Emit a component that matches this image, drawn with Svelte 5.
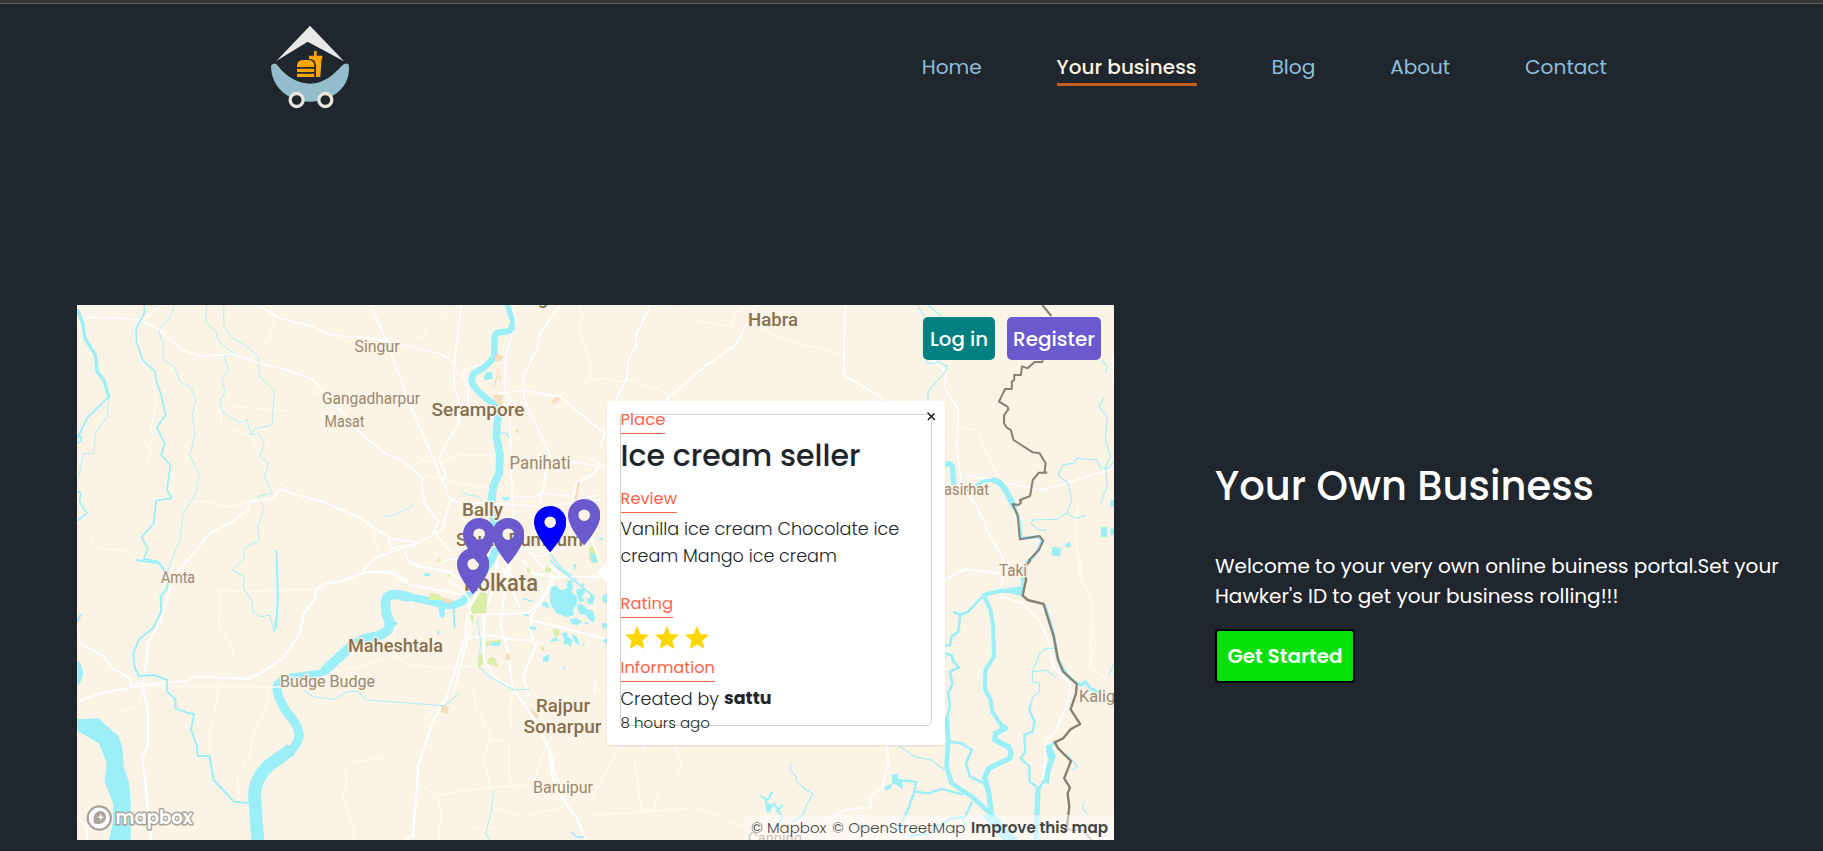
<script>
  const nav = [
    { label: 'Home', w: 60 },
    { label: 'Your business', w: 140, active: true },
    { label: 'Blog', w: 44 },
    { label: 'About', w: 60 },
    { label: 'Contact', w: 82 }
  ];

  // Map pins: tip x and top y inside the map, in pixels
  const pins = [
    { x: 401.5, y: 212.5, color: 'slateblue' },
    { x: 431, y: 212.5, color: 'slateblue' },
    { x: 396, y: 243, color: 'slateblue' },
    { x: 473, y: 200.5, color: 'blue' },
    { x: 507, y: 193.5, color: 'slateblue' }
  ];

  // Sizes a line of type so that it takes the given width
  function fit(node, width) {
    const natural = node.getBoundingClientRect().width;
    const size = parseFloat(getComputedStyle(node).fontSize);
    node.style.fontSize = (size * width) / natural + 'px';
  }
</script>

<div class="page">
  <header>
    <svg class="logo" viewBox="60 72 240 256" width="80" height="85.3">
      <path fill="#e9e9ea" d="M180 77 282 184 173 125 79 183Z" />
      <path fill="#93bdcd" d="M63 199Q64 191 71 191 78 190 84 198C110 232 145 251 181 251 220 250 246 230 277 196Q286 188 294 192 298 194 297 208C296 265 246 305 180 305 114 305 64 262 63 199Z" />
      <g fill="#ffa500">
        <path d="M141 201V195Q143 180 160 180H174Q191 180 193 195V201Z" />
        <path d="M141 206H193V216H141ZM141 221H193V231H141Z" />
        <path d="M192 153H200V167H217V176H215L211 231H198V196Q198 187 191 180L177 176V167H192Z" />
      </g>
      <g fill="#20262d" stroke="#e8e5dc" stroke-width="10">
        <circle cx="140" cy="300" r="19.5" /><circle cx="226" cy="300" r="19.5" />
      </g>
    </svg>
    <nav>
      {#each nav as item}
        <a class:active={item.active} style="width:{item.w}px"><span use:fit={item.w}>{item.label}</span></a>
      {/each}
    </nav>
  </header>

  <main>
    <section class="map">
      <svg class="tiles" viewBox="0 0 1037 535" width="1037" height="535">
        <rect width="1037" height="535" fill="#fbf3e5" />

        <g transform="translate(-7 -5) scale(.338 .33333)" fill="none" stroke-linejoin="round">
          <g stroke="#fffaf3" stroke-width="4">
            <path d="M205 160 215 190 245 240 255 310 240 390 250 415 230 435 238 460 225 495 250 515 290 540 310 580 345 605 400 604 450 620 500 617 525 605M20 665 55 700 80 745 155 750 210 790 270 820 340 830" />
            <path d="M595 15 605 70 590 120 550 150 530 180M440 340 455 325 520 322 640 333 700 300 725 278 745 276M445 345 450 375 540 410 555 460 580 515 620 545 655 575M1010 500 1040 480 1080 490 1160 465 1260 465M1045 528 1105 532 1150 550 1240 565M1010 135 1020 120 1050 105 1060 80 1100 50 1150 20" />
            <path d="M1510 15 1518 60 1505 80 1540 190 1540 240 1470 270 1430 295M885 665 905 720 920 770" />
          </g>
          <g stroke="#a9f0f2" stroke-width="2.6">
            <path d="M310 15 292 60 262 90 275 130 275 180 310 200 325 245 358 262 372 300 362 345 370 400 355 465 382 520 372 580 335 640 325 720 300 780 285 830" />
            <path d="M405 15 400 65 432 95 440 125 485 160 455 170 470 210 450 240 460 275 445 300 450 335 500 368 525 360 535 405 560 400 575 435 560 470 588 490 575 530 598 580 555 590 575 625 555 680 560 720 515 745 515 775 480 810" />
            <path d="M455 15 455 80 480 115 525 140 557 170 560 230 605 270 598 375 550 385 530 405M115 290 110 350 75 400 70 460 40 462 25 535M932 650 960 645 1018 615M1158 567 1170 583 1210 590 1225 605" />
          </g>
          <g stroke="#fff" stroke-width="5">
            <path d="M22 70 60 52 150 54 215 62 265 90 330 150 390 168 485 163 560 190 650 212 720 240 790 320 870 410 940 465 980 480 1040 530 1047 610 1090 665 1075 695 1105 730 1125 755" />
            <path d="M215 62 270 15M555 15 620 55 720 80 770 105 900 115 980 135 1095 160 1138 190" />
            <path d="M888 15 940 130 1000 300 1060 440 1125 600 1100 690 1025 730 900 775 865 815M1158 15 1140 160 1135 250 1150 300 1150 370 1090 475 1112 520 1100 545" />
            <path d="M1310 15 1320 60 1290 160 1285 270 1300 300 1305 500 1312 700 1300 830M1450 15 1390 100 1380 150 1340 230 1345 300 1420 465 1390 610M1250 180 1180 205 1160 220 1180 270 1175 330" />
            <path d="M1270 280 1350 272 1450 290 1568 390M1480 485 1568 498 1545 525 1500 545 1485 600 1568 585M1310 590 1370 590 1400 580 1485 588M1125 600 1160 608 1240 610 1320 615 1400 620 1568 600" />
            <path d="M320 815 415 700 480 665 525 630 530 605 595 597 625 567 660 582 750 605 860 655 940 710 950 745 1025 732M945 715 1025 727M990 750 1000 780 1040 800 1110 815 1165 840M805 840 880 815 960 815 1000 840" />
            <path d="M1095 785 1180 770 1260 760 1330 745 1390 770 1470 740 1500 620M1200 750 1270 800 1330 840M1340 730 1390 790 1430 830" />
          </g>
          <g stroke="#9beff8">
            <path stroke-width="10" d="M22 28 38 70 44 115 75 165 80 215 100 240 115 290" />
            <path stroke-width="6" d="M115 290 50 355 22 415" />
            <path stroke-width="5" d="M20 410H32V422L22 430M220 15V40L195 85 197 125 215 180 252 215 257 250 270 285 283 345 257 382 280 430 270 465 297 495 287 570 301 595 255 602 248 670 212 712 230 745 218 777 260 784 285 818M22 575 32 578 28 605 50 640 22 662M611 750 613 840" />
            <path stroke-width="15" d="M1294 15 1309 60 1307 84 1296 94 1262 98" />
            <path stroke-width="19" d="M1308 75Q1310 93 1292 94L1265 98 1256 110 1255 170Q1235 200 1195 220 1180 240 1200 265 1230 300 1268 317" />
            <path stroke-width="23" d="M1265 312 1266 355 1261 405 1272 465 1270 518 1252 560 1246 615 1258 680 1266 735 1245 785 1175 890Q1155 920 1110 915L1050 900 960 883" />
            <path stroke-width="29" d="M1005 892 970 884Q930 880 934 915L937 945Q953 975 940 990 920 1010 875 1015L830 1040 750 1115" />
            <path stroke-width="20" d="M845 1025 750 1118 640 1133 613 1155 615 1175" />
            <path stroke-width="27" d="M630 1142Q603 1155 619 1195L640 1235Q690 1290 674 1320 667 1350 605 1390" />
            <path stroke-width="38" d="M655 1348 590 1395Q545 1435 546 1490L556 1625" />
            <path stroke-width="4" d="M1420 760 1450 800 1500 840M1265 398 1290 400 1300 412" />
          </g>
          <path fill="#9beff8" d="M1230 218 1248 215 1252 235 1235 240 1222 237ZM1280 590 1300 592 1298 600 1280 600ZM1490 795 1498 790 1495 808 1488 808ZM1048 820H1065V828H1048Z" />
          <path fill="#f3debb" d="M1250 285 1280 285 1280 320 1265 315ZM1425 300 1440 290 1452 297 1430 314ZM1262 160 1285 172 1270 184 1255 180ZM1320 385 1331 398 1320 398ZM1503 545 1508 545 1500 600 1492 600Z" />
          <path stroke="#f3debb" stroke-width="3" d="M1255 262 1268 205 1274 245M1260 240 1272 230" />
          <path fill="#daeeaa" d="M1090 775 1102 780 1085 790ZM1538 740 1550 738 1560 785 1545 790 1535 770ZM1405 800 1425 805 1420 818 1407 815ZM1352 800 1365 812 1355 820Z" />
        </g>

        <g transform="translate(-7 255) scale(.338 .33333)" fill="none" stroke-linejoin="round">
          <g stroke="#fffaf3" stroke-width="4">
            <path d="M445 90 440 200 480 260 485 290 540 330M445 90 520 95 640 90 750 88M440 370 435 430 412 510 415 580M222 378 480 378 600 382 700 370M590 385 580 440 535 545 535 580 495 650 500 720M150 455 205 440 210 405" />
            <path d="M1110 420 1000 520 920 597 830 605 815 640 820 680 805 710 840 800 838 840M1030 673 1090 705 1250 680 1370 677 1390 600 1425 530M1085 705 1100 760 1090 840M1240 540 1300 545 1298 640 1310 675M1240 740 1340 770 1460 740M1150 840 1200 800 1260 805 1290 840M1195 385 1200 440 1245 530 1225 600 1245 680M1310 400 1300 460 1310 510" />
            <path d="M1015 140 960 200 960 290 1010 315 1120 325 1205 315M700 380 790 330 860 320 940 290 960 270" />
          </g>
          <g stroke="#fff" stroke-width="6">
            <path d="M22 425 90 400 215 376 350 362 370 350 530 356 580 330 630 295 680 220 692 160 725 115 727 90 750 72 810 62 880 35 950 40 1010 75 1100 92 1160 105" />
            <path d="M345 0 300 65 285 125 265 190 230 250 228 300 215 376 230 450 230 560 215 590 225 690 240 840M22 210 32 250 100 290 125 325 180 355 180 380 215 378M188 382Q190 365 215 370 225 390 210 403M22 770 50 805 52 840" />
            <path d="M1120 65 1150 80 1180 115 1185 160 1290 162 1360 158 1385 130 1410 95 1430 50 1568 50M1175 160 1170 230 1115 410 1075 480 1030 620 1015 830M1185 165 1183 210 1165 280 1135 400M1000 0 1030 20 1130 35M990 840 1015 825" />
            <path d="M1235 50 1225 190 1225 300 1260 355 1310 385 1350 440 1380 490 1418 570 1425 640 1440 690 1470 735 1500 775 1525 840M1395 520 1428 590 1430 630 1460 700 1470 735M1290 30 1275 200 1295 270 1310 380M1420 20 1450 40 1390 130 1365 170 1360 210 1378 260 1340 350 1358 410M1360 180 1450 200 1568 235M1180 235 1240 225 1320 240 1375 240M1265 0 1250 90 1220 180M1200 0 1230 40 1200 110 1185 140M1340 0 1370 40 1430 50M1290 0 1310 90 1330 140" />
          </g>
          <g stroke="#a9f0f2" stroke-width="3">
            <path d="M480 30 515 50 513 85 540 125 540 155 565 170 590 165 605 215 607 180M690 390 720 410 780 418 820 395 850 392 875 420 1110 437 1150 400M1205 180 1215 240 1210 320 1240 350 1315 390 1360 388M1255 690 1245 760 1230 820 1240 840" />
          </g>
          <g stroke="#9beff8" stroke-width="6">
            <path d="M612 0 615 120 609 205M195 0 265 10 292 50 288 85 268 110 270 155 245 205 205 237 187 280 192 325 205 348 250 345 287 360 288 395 312 418 312 445 345 458 367 462 358 510 375 555 378 588 413 588 425 660 485 725 535 730M22 185 32 162M1135 140 1138 205" />
            <path stroke-width="5" d="M1482 815 1500 832 1520 830M1420 0 1440 20 1490 60 1550 110M1340 115 1370 125" />
          </g>
          <g fill="#9beff8">
            <path d="M22 478 85 475 102 492 143 528 155 560 159 620 174 665 180 720V840H115L127 790 128 730 102 665 109 610 85 550 22 512ZM22 300Q40 320 38 345 35 365 22 375Z" />
            <path d="M1422 82 1440 77 1450 90 1470 85 1472 62 1485 60 1488 82 1482 95 1500 110 1500 130 1488 150 1492 165 1470 172 1440 160 1420 130ZM1395 128 1410 125 1420 145 1400 140Z" />
            <path d="M1498 88 1520 84 1524 98 1515 108 1522 122 1508 128 1500 108ZM1512 70H1522V78H1512ZM1530 112 1548 125 1545 135 1530 128ZM1498 135 1515 132 1532 150 1540 148 1555 175 1538 182 1525 165 1508 162ZM1478 178 1498 174 1515 186 1500 196 1485 192ZM1520 185 1535 188 1530 196Z" />
            <path d="M1420 240 1440 230 1445 243 1425 245ZM1455 220 1470 217 1475 232 1488 240 1480 262 1472 250 1458 256 1462 240ZM1485 222 1500 232 1510 255 1498 250 1490 242ZM1515 250 1525 255 1520 262ZM1400 290 1420 282 1415 305 1400 305ZM1360 198 1380 202 1378 210 1362 208ZM1245 247 1275 247 1272 257 1245 257ZM1458 318 1467 322 1465 330ZM1085 215 1095 213 1090 225Z" />
            <path d="M1090 142 1110 145 1108 170 1100 175 1093 165ZM955 180 970 190 955 205ZM1343 163H1357V169H1343Z" />
          </g>
          <path fill="#daeeaa" d="M1067 98 1095 105 1105 120 1060 120ZM1215 95 1235 100 1232 160 1190 162 1185 145ZM1183 165 1195 165 1190 195ZM1430 205 1450 210 1445 230 1430 225ZM1230 245 1275 240 1278 246 1245 247 1240 258 1230 260ZM1240 293 1255 292 1268 320 1232 310ZM1208 285 1220 282 1222 315 1207 322ZM1390 258 1405 265 1398 275ZM1118 42 1128 45 1122 55ZM1352 20 1365 32 1355 42ZM1405 20 1425 28 1420 38Z" />
          <path fill="#f3debb" d="M1100 437 1122 440 1115 462 1097 455ZM1103 112 1132 120 1128 130 1103 126ZM1293 275 1303 290 1300 302 1288 295ZM1365 445 1385 465 1385 480 1365 460ZM1435 58 1443 60 1438 70Z" />
        </g>

        <g transform="translate(513 -5) scale(.338 .33333)" fill="none" stroke-linejoin="round">
          <g stroke="#fffaf3" stroke-width="4">
            <path d="M220 15 300 60 420 80 430 40 460 20M490 75 560 115 750 165M0 240 35 235 80 245 140 240 155 260 200 265 235 290M1085 380 1145 390 1160 430 1210 530M1445 600 1435 700 1450 800 1445 840" />
          </g>
          <g stroke="#fff" stroke-width="5">
            <path d="M180 15 138 100 135 140 115 175 108 240 75 300M490 15 455 90 430 135 340 200 225 300M755 15 750 225 860 290V305M0 365 45 400 30 440M0 475 45 500M1010 175 1055 220 1047 260 1090 330 1085 440 1100 560 1145 620 1190 720 1230 790 1220 840M1110 525 1210 545 1340 570 1568 500M1340 565V575M1545 165 1550 245" />
            <path d="M1050 840 1110 808 1190 815" />
          </g>
          <g stroke="#9beff8">
            <path stroke-width="3" d="M968 15 990 50M1000 15 1040 50M1050 195 1058 200 1055 210 1000 275V303M995 180 1000 190 1020 190 1030 183 1055 200M1515 180 1530 200 1525 220M1520 295 1505 320 1530 350 1525 420 1540 470 1525 500 1530 560 1510 610M1568 485 1545 490 1535 505 1510 505 1500 480 1440 475 1430 490 1400 495 1385 525 1415 550 1425 600 1410 640 1380 658 1310 660 1305 670 1325 690 1350 690M1410 640 1440 655 1468 645" />
            <path stroke-width="16" d="M1050 495Q1070 485 1073 505L1076 555" />
            <path stroke-width="10" d="M1110 575 1145 555 1165 543 1200 540" />
            <path stroke-width="18" d="M1190 541Q1210 540 1230 570L1257 625" />
            <path stroke-width="10" d="M1255 620 1270 660 1275 715 1330 710 1338 725 1320 760 1285 800V840" />
          </g>
          <path fill="#9beff8" d="M1368 740 1395 745 1390 770 1365 765ZM1405 735 1418 725 1425 738 1410 745ZM1512 682H1530V710H1512ZM1540 685H1550V705H1540ZM1540 600H1550V620H1540ZM25 720 35 710 38 720Z" />
          <path fill="#daeeaa" d="M0 740 15 740 25 790 0 780Z" />
          <path fill="#9beff8" d="M0 755 15 765 22 788 5 785Z" />
          <path stroke="#fff" stroke-width="6" d="M0 700 30 790" />
          <path stroke="#878074" stroke-width="6" d="M1338 15 1365 48M1340 181 1338 186H1315L1295 205 1278 199 1275 225H1255V240L1248 245V267H1228L1210 305 1235 320 1238 328 1225 345V370L1232 382 1245 390 1253 420 1310 457 1330 460 1348 490 1345 515 1350 518H1328L1310 540 1302 588 1272 600 1275 608 1268 615 1250 612 1265 645 1272 718 1330 708 1341 722 1328 750 1290 790V840" />
        </g>

        <g transform="translate(513 255) scale(.338 .33333)" fill="none" stroke-linejoin="round">
          <g stroke="#fffaf3" stroke-width="4">
            <path d="M90 555 0 725M155 555 160 585 130 600 140 650 150 750 190 755 195 710 265 640 270 600 250 560M0 765 150 757 320 742 450 800M1450 0 1455 60 1485 120 1480 320 1525 355 1550 380M1480 190 1495 240 1480 320" />
          </g>
          <g stroke="#fff" stroke-width="5">
            <path d="M875 555 883 590 880 620 865 680 830 710 832 742 760 748 720 770 680 783M1050 60 1105 28 1180 35 1225 45 1210 90 1220 110 1280 130 1330 180 1355 240 1370 320 1420 370 1415 420 1375 520 1350 540 1340 680" />
            <path d="M0 50 20 50M0 220 50 240M15 360V400" />
          </g>
          <g stroke="#9beff8">
            <path stroke-width="12" d="M1280 95 1215 92 1165 105 1185 150 1193 200 1195 290 1170 330 1168 385 1185 420 1190 455 1220 500" />
            <path stroke-width="16" d="M1215 495 1230 505 1200 520 1198 540 1238 560Q1250 575 1242 595L1180 625 1168 650 1180 700 1187 760" />
            <path stroke-width="8" d="M1160 110 1120 155 1095 165 1075 155M1095 165 1090 215 1070 230 1065 255 1050 258M1050 280 1070 285 1075 305 1092 322 1065 335 1072 370 1060 400 1065 440 1055 480 1062 545 1100 550 1130 570 1112 610 1125 650 1165 670 1185 700" />
            <path stroke-width="14" d="M1055 470 1060 535 1055 620 1070 670 1130 710 1210 785" />
            <path stroke-width="7" d="M1105 705 1040 687 1000 700 960 695 940 750 920 790M960 695 965 665 910 660M1305 430 1300 450 1315 485 1310 515 1285 525 1288 575 1275 595 1300 620 1300 665 1330 685 1355 640 1362 600 1352 570 1375 545M1130 725 1110 770 1070 775 1025 800 1000 820 940 830M1100 775 1110 795" />
            <path stroke-width="16" d="M1325 685 1320 840M1355 555 1370 590 1355 630 1350 670" />
            <path stroke-width="9" d="M1282 95 1278 40 1295 0M1345 135 1372 220 1382 290 1410 345 1440 370M1440 370 1455 375 1465 365 1480 385 1510 400" />
            <path stroke-width="3" d="M1305 430 1310 410 1330 395 1330 370 1310 365 1308 335 1325 300 1330 280 1350 265 1375 265M1310 335 1350 330 1378 352M915 558 960 590 1010 600 1050 630M595 610 592 630 610 650 610 665 640 690 660 700 655 710 640 735 630 765M1550 310 1535 345M1460 725 1457 745 1470 760 1468 775M1410 580 1442 620 1425 630" />
            <path stroke-width="6" d="M505 708 525 720 540 695M520 720 525 755 545 730 570 775 550 800M550 755 570 735M630 765 600 785" />
            <path stroke-width="11" d="M1200 778 1260 840M530 730 530 755" />
          </g>
          <path fill="#9beff8" d="M893 643H912V660H925V690L908 675 893 670 890 685 873 692V680L893 670ZM1230 85 1280 78V110L1240 98ZM35 110 50 100V130L38 125ZM35 190H50V205H38ZM38 240 50 235V255ZM0 100 15 110 10 125 0 130ZM0 150 12 155V190L0 180ZM1160 765H1195L1265 840H1220Z" />
          <path stroke="#878074" stroke-width="7" d="M1303 0 1287 20 1290 60 1280 107 1295 120 1342 132 1372 230 1385 300 1400 335 1440 372 1438 400 1422 448 1450 492 1422 508 1400 535 1375 547 1385 565 1423 603 1403 655 1420 683 1413 700 1418 740 1410 810" />
          <path stroke="#b9b3a9" stroke-width="7" d="M1410 808 1458 812 1485 840" />
        </g>

        <g class="labels">
          <g class="minor">
            <text x="277.6" y="46.7" textLength="45" lengthAdjust="spacingAndGlyphs">Singur</text>
            <text x="245" y="98.7" textLength="98" lengthAdjust="spacingAndGlyphs">Gangadharpur</text>
            <text x="247.5" y="121.5" textLength="40" lengthAdjust="spacingAndGlyphs">Masat</text>
            <text class="mid" x="432.5" y="164" textLength="61" lengthAdjust="spacingAndGlyphs">Panihati</text>
            <text x="84" y="278" textLength="34" lengthAdjust="spacingAndGlyphs">Amta</text>
            <text x="203" y="381.500" textLength="95" lengthAdjust="spacingAndGlyphs">Budge Budge</text>
            <text x="456" y="487.700" textLength="60" lengthAdjust="spacingAndGlyphs">Baruipur</text>
            <text x="858" y="189.500" textLength="54" lengthAdjust="spacingAndGlyphs">Basirhat</text>
            <text x="922" y="270.5" textLength="28" lengthAdjust="spacingAndGlyphs">Taki</text>
            <text x="1002" y="396.700" textLength="58" lengthAdjust="spacingAndGlyphs">Kaliganj</text>
            <text x="671" y="539" textLength="54" lengthAdjust="spacingAndGlyphs">Canning</text>
          </g>
          <g class="major">
            <text x="354.500" y="110.700" textLength="93" lengthAdjust="spacingAndGlyphs">Serampore</text>
            <text x="385" y="211" textLength="41" lengthAdjust="spacingAndGlyphs">Bally</text>
            <text x="379" y="241" textLength="127" lengthAdjust="spacingAndGlyphs">South Dumdum</text>
            <text x="271" y="346.700" textLength="95" lengthAdjust="spacingAndGlyphs">Maheshtala</text>
            <text x="459" y="406.700" textLength="54" lengthAdjust="spacingAndGlyphs">Rajpur</text>
            <text x="446.500" y="427.700" textLength="78" lengthAdjust="spacingAndGlyphs">Sonarpur</text>
            <text x="671" y="21" textLength="50" lengthAdjust="spacingAndGlyphs">Habra</text>
            <text x="430" y="-1.5">Ranga</text>
            <text class="city" x="387" y="286" textLength="74" lengthAdjust="spacingAndGlyphs">Kolkata</text>
          </g>
        </g>

        <g class="brand">
          <circle cx="22.3" cy="513" r="11.6" fill="#fff" stroke="#aaa39a" stroke-width="2.2" />
          <path fill="#aaa39a" d="M17 518.500C15.500 511 18 506 23.500 506 27 506 29.300 509 29 512.500 28.500 518 23 520 17 518.500Z" />
          <path fill="#fff" d="M23.800 508.200 24.700 511.300 27.600 512.200 24.700 513.100 23.800 516.200 22.900 513.100 20 512.200 22.900 511.300Z" />
          <text x="38.500" y="518.500" textLength="77" lengthAdjust="spacingAndGlyphs">mapbox</text>
        </g>
      </svg>

      {#each pins as pin}
        <svg class="pin" viewBox="5 2 14 20" width="32.400" height="46.300" style="left:{pin.x - 16}px;top:{pin.y}px">
          <path fill={pin.color} d="M12 2C8.130 2 5 5.130 5 9c0 5.250 7 13 7 13s7-7.750 7-13c0-3.870-3.130-7-7-7zm0 9.500a2.500 2.500 0 0 1 0-5 2.500 2.500 0 0 1 0 5z" />
        </svg>
      {/each}

      <div class="auth">
        <button class="login"><span use:fit={58}>Log in</span></button>
        <button class="register"><span use:fit={82}>Register</span></button>
      </div>

      <div class="popup">
        <div class="card">
          <div class="label"><span use:fit={45}>Place</span></div>
          <h4><span use:fit={240}>Ice cream seller</span></h4>
          <div class="label review"><span use:fit={56.500}>Review</span></div>
          <p class="desc"><span use:fit={279}>Vanilla ice cream Chocolate ice</span><br /><span use:fit={216.500}>cream Mango ice cream</span></p>
          <div class="label rating"><span use:fit={52.500}>Rating</span></div>
          <div class="stars">
            {#each [1, 2, 3] as _}
              <svg viewBox="2 2 20 19" width="24" height="23"><path fill="gold" d="M12 17.270 18.180 21l-1.640-7.030L22 9.240l-7.190-.61L12 2 9.190 8.630 2 9.240l5.460 4.730L5.820 21z" /></svg>
            {/each}
          </div>
          <div class="label info"><span use:fit={94.500}>Information</span></div>
          <div class="by"><span use:fit={98.500}>Created by</span><b><span use:fit={47.500}>sattu</span></b></div>
          <div class="ago"><span use:fit={89.500}>8 hours ago</span></div>
        </div>
        <svg class="close" viewBox="0 0 9 9" width="9" height="9"><path d="M.5 .5 8 8M7.500 1.500 .8 8" stroke="#111" stroke-width="1.300" fill="none" /></svg>
      </div>

      <div class="attrib">
        <span use:fit={75.500}>© Mapbox</span>
        <span use:fit={133.500}>© OpenStreetMap</span>
        <b><span use:fit={137}>Improve this map</span></b>
      </div>
    </section>

    <section class="intro">
      <h1><span use:fit={379}>Your Own Business</span></h1>
      <p><span use:fit={564}>Welcome to your very own online buiness portal.Set your</span><br /><span use:fit={404}>Hawker's ID to get your business rolling!!!</span></p>
      <button><span use:fit={115}>Get Started</span></button>
    </section>
  </main>
</div>

<style>
  :global(body) { background: #20262d; overflow: hidden; }
  .page {
    box-sizing: border-box;
    width: 1823px;
    height: 851px;
    border-top: 3px solid #373737;
    border-bottom: 1px solid #1a1a28;
    background: #20262d;
    box-shadow: inset 0 1px #565c5f;
    font-family: Poppins, Inter, sans-serif;
    overflow: hidden;
  }
  span { white-space: nowrap; }
  button { font: inherit; border: 0; padding: 0; white-space: nowrap; }
  header {
    display: flex;
    justify-content: space-between;
    height: 115px;
    padding: 0 216px 0 270px;
  }
  .logo { margin-top: 21px; }
  nav { display: flex; gap: 74.800px; padding-top: 49px; font-size: 20px; }
  nav a { height: 31px; line-height: 31px; color: #8dbfdb; border-bottom: 3px solid transparent; white-space: nowrap; }
  nav a.active { color: #fcf6e3; font-weight: 500; border-color: #c55f1f; }
  main { display: flex; padding: 187px 0 0 77px; }
  .map { position: relative; width: 1037px; height: 535px; overflow: hidden; flex: none; }
  .tiles { display: block; }
  .labels { font-family: Roboto, sans-serif; stroke: #fbf3e5; stroke-width: 2.500px; stroke-linejoin: round; }
  .labels text { paint-order: stroke; }
  .minor { font-size: 16px; fill: #9b8871; }
  .mid { font-size: 17.500px; }
  .major { font-size: 18px; font-weight: 500; fill: #86704f; }
  .city { font-size: 23px; }
  .brand text { font: 600 20px Poppins, Inter, sans-serif; fill: #fff; stroke: #aaa39a; stroke-width: 3px; paint-order: stroke; stroke-linejoin: round; }
  .pin { position: absolute; }
  .auth { position: absolute; top: 12px; right: 13px; display: flex; gap: 12px; font-size: 20px; font-weight: 500; }
  .auth button { height: 43px; padding-top: 1px; border-radius: 5px; color: #fff; }
  .login { width: 72px; background: teal; }
  .register { width: 94px; background: slateblue; }
  .popup {
    position: absolute;
    left: 530px;
    top: 96px;
    box-sizing: border-box;
    width: 338px;
    height: 344px;
    padding: 13px;
    background: #fff;
    border-radius: 4px;
    box-shadow: 0 1px 2px rgba(0, 0, 0, .1);
    color: #212529;
  }
  .popup::before {
    content: "";
    position: absolute;
    left: -10px;
    top: 162px;
    border: 10px solid transparent;
    border-left: 0;
    border-right-color: #fff;
  }
  .card { box-sizing: border-box; width: 312px; height: 312px; border: 1px solid #d0d0d0; border-radius: 5px; }
  .card > :first-child { margin-top: -8px; }
  .label { width: max-content; height: 26px; line-height: 25px; font-size: 16px; color: tomato; border-bottom: 1px solid tomato; }
  .card > * { margin-left: -.500px; }
  .card > h4 { margin-top: 4px; margin-bottom: 0; font-size: 29px; line-height: 35px; height: 34px; font-weight: 500; }
  .review { margin-top: 14px; }
  .card > .desc { margin-top: 2px; margin-bottom: 0; font-size: 17px; line-height: 27px; font-weight: 300; }
  .rating { margin-top: 21px; }
  .stars { display: flex; gap: 6px; padding: 8px 4px 6px; }
  .by { display: flex; gap: 5px; margin-top: 3px; font-size: 17px; line-height: 27px; font-weight: 300; }
  .by b { font-weight: 700; }
  .ago { font-size: 15px; line-height: 22px; font-weight: 300; }
  .close { position: absolute; right: 9px; top: 11px; }
  .attrib {
    position: absolute;
    right: 0;
    bottom: 0;
    box-sizing: border-box;
    width: 370px;
    height: 25px;
    padding: 0 6px 0 7px;
    display: flex;
    justify-content: space-between;
    background: rgba(255, 255, 255, .5);
    color: #444;
    font-size: 15px;
    line-height: 25px;
    font-weight: 300;
  }
  .attrib b { font-weight: 600; }
  .intro { padding: 154px 0 0 101px; color: #fff; }
  h1 { margin: 0; font-size: 40px; line-height: 55px; font-weight: 500; }
  .intro p { margin: 37px 0 0; font-size: 20px; line-height: 30px; }
  .intro button {
    display: block;
    box-sizing: border-box;
    width: 140px;
    height: 54px;
    margin-top: 18px;
    border: 2px solid #000;
    border-radius: 4px;
    background: #07e006;
    color: #fff;
    font-size: 20px;
    font-weight: 600;
  }
</style>
